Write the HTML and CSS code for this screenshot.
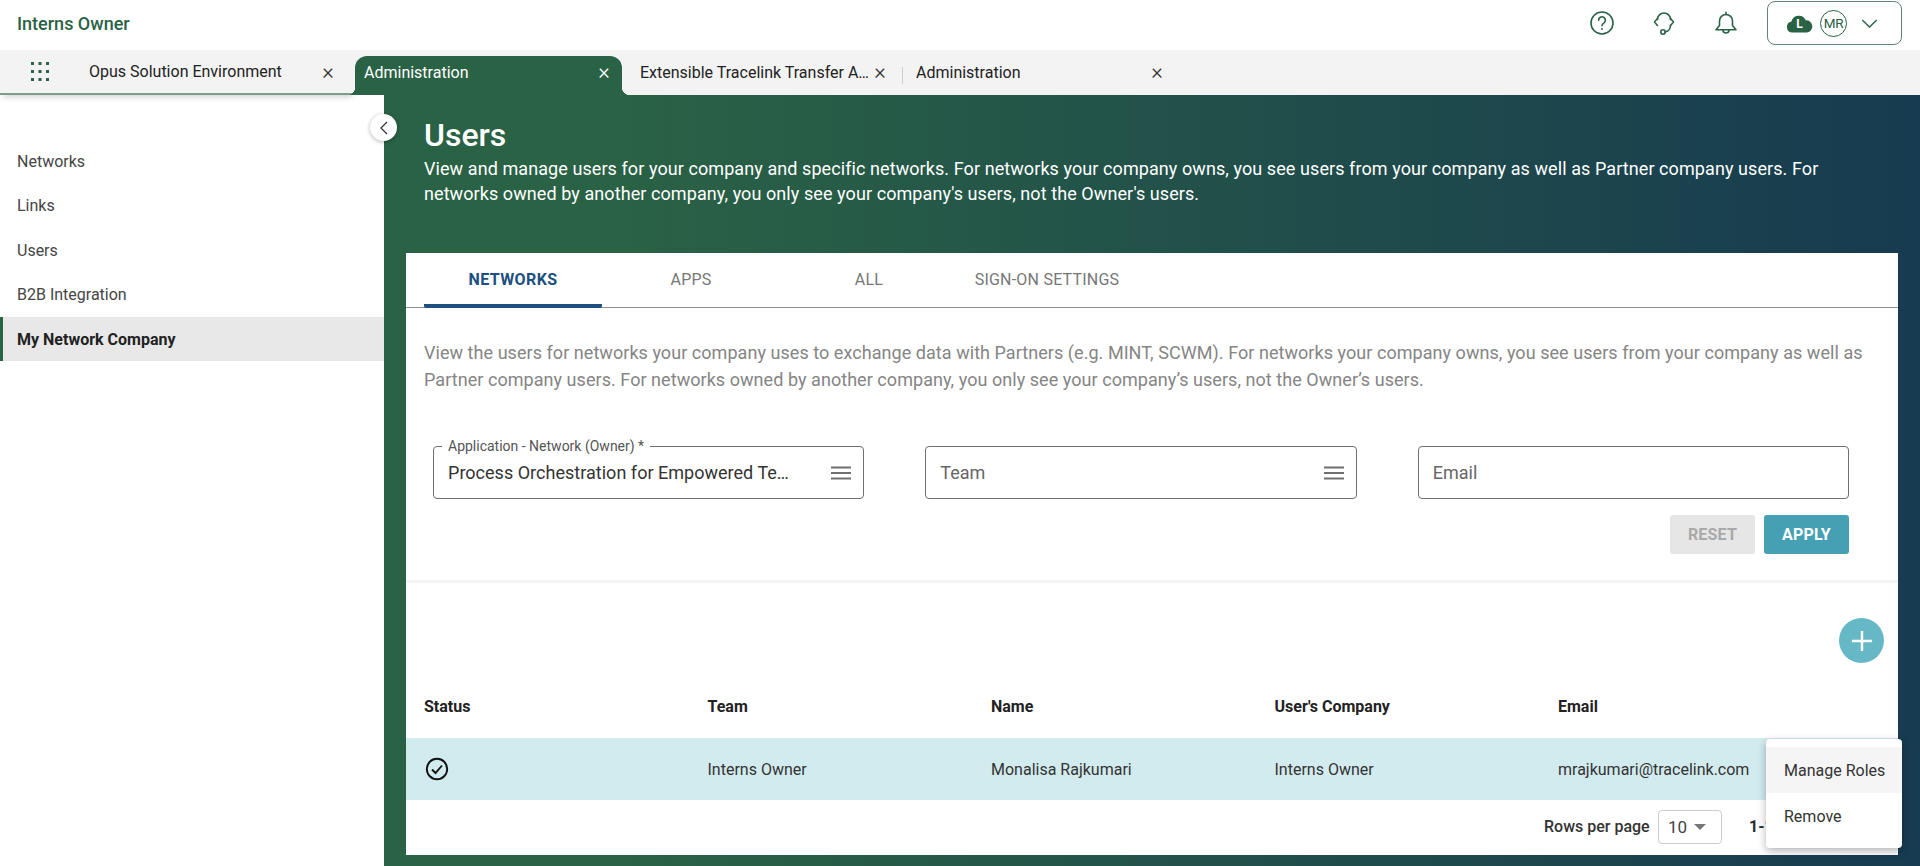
FILE: index.html
```html
<!DOCTYPE html>
<html lang="en">
<head>
<meta charset="utf-8">
<title>Users</title>
<link rel="stylesheet" href="styles.css">
</head>
<body>
<header class="topbar">
  <div class="org">Interns Owner</div>
  <div class="top-actions">
    <svg class="ico" viewBox="0 0 24 24"><circle cx="12" cy="12" r="11"/><path d="M8.600 9.200a3.400 3.400 0 1 1 5.200 2.900c-1.200.8-1.800 1.400-1.800 2.700"/><circle class="fill" cx="12" cy="18" r=".9"/></svg>
    <svg class="ico" viewBox="0 0 24 24"><path d="M5.500 8.500a6.500 6.500 0 0 1 13 0"/><path d="M5.500 7.500 2.500 11l3 3.500M18.500 7.500l3 3.500-3 3.500"/><path d="M18.500 14.500c0 3.500-2.500 6-5.500 6.500"/><circle cx="11" cy="21" r="2.200"/></svg>
    <svg class="ico" viewBox="0 0 24 24"><path d="M12 3.500a6.500 6.500 0 0 0-6.500 6.500v4.500L2 18.800h20l-3.500-4.300V10A6.500 6.500 0 0 0 12 3.500z"/><path d="M12 1.200v2.300M9 19a3 3 0 0 0 6 0"/></svg>
    <div class="account">
      <span class="cloud">
        <svg viewBox="0 0 28 20"><path class="fill" d="M6.500 19.500a5.800 5.800 0 0 1-1-11.500A8 8 0 0 1 20.500 6.500a6.500 6.500 0 0 1 1 13z"/></svg>
        <b>L</b>
      </span>
      <span class="avatar">MR</span>
      <svg class="chev" viewBox="0 0 18 10"><path d="M1 1l8 8 8-8"/></svg>
    </div>
  </div>
</header>

<nav class="tabbar">
  <div class="tabbar-left">
    <svg class="apps" viewBox="0 0 18 20"><g><rect x="0" y="0" width="3" height="3"/><rect x="7.500" y="0" width="3" height="3"/><rect x="15" y="0" width="3" height="3"/><rect x="0" y="8" width="3" height="3"/><rect x="7.500" y="8" width="3" height="3"/><rect x="15" y="8" width="3" height="3"/><rect x="0" y="16" width="3" height="3"/><rect x="7.500" y="16" width="3" height="3"/><rect x="15" y="16" width="3" height="3"/></g></svg>
    <div class="tab tab-first"><span class="tab-label">Opus Solution Environment</span><span class="x">×</span></div>
  </div>
  <div class="tab tab-active"><span class="tab-label">Administration</span><span class="x">×</span></div>
  <div class="tab tab-third"><span class="tab-label">Extensible Tracelink Transfer A…</span><span class="x">×</span></div>
  <div class="tab tab-fourth"><span class="tab-label">Administration</span><span class="x">×</span></div>
</nav>

<div class="shell">
  <aside class="sidebar">
    <a class="nav-item">Networks</a>
    <a class="nav-item">Links</a>
    <a class="nav-item">Users</a>
    <a class="nav-item">B2B Integration</a>
    <a class="nav-item nav-active">My Network Company</a>
  </aside>
  <button class="collapse"><svg viewBox="0 0 8 14"><path d="M7 1L1 7l6 6"/></svg></button>
  <main class="main">
    <h1>Users</h1>
    <p class="lede">View and manage users for your company and specific networks. For networks your company owns, you see users from your company as well as Partner company users. For networks owned by another company, you only see your company's users, not the Owner's users.</p>
    <section class="card">
      <div class="card-tabs">
        <div class="ctab ctab-active">NETWORKS</div>
        <div class="ctab">APPS</div>
        <div class="ctab">ALL</div>
        <div class="ctab">SIGN-ON SETTINGS</div>
      </div>
      <p class="intro">View the users for networks your company uses to exchange data with Partners (e.g. MINT, SCWM). For networks your company owns, you see users from your company as well as Partner company users. For networks owned by another company, you only see your company’s users, not the Owner’s users.</p>
      <div class="filters">
        <div class="field">
          <span class="field-label">Application - Network (Owner) *</span>
          <span class="field-value">Process Orchestration for Empowered Te…</span>
          <svg class="menu-ico" viewBox="0 0 20 14"><path d="M0 1.500h20M0 7h20M0 12.500h20"/></svg>
        </div>
        <div class="field">
          <span class="field-value muted">Team</span>
          <svg class="menu-ico" viewBox="0 0 20 14"><path d="M0 1.500h20M0 7h20M0 12.500h20"/></svg>
        </div>
        <div class="field">
          <span class="field-value muted">Email</span>
        </div>
      </div>
      <div class="actions">
        <button class="btn btn-reset">RESET</button>
        <button class="btn btn-apply">APPLY</button>
      </div>
      <div class="table-area">
        <div class="add-row"><button class="add"><svg viewBox="0 0 24 24"><path d="M12 1v22M1 12h22"/></svg></button></div>
        <div class="trow thead">
          <div>Status</div><div>Team</div><div>Name</div><div>User's Company</div><div>Email</div>
        </div>
        <div class="trow tselected">
          <div><svg class="status" viewBox="0 0 24 24"><circle cx="12" cy="12" r="10.200"/><path d="M7 12.500l3.500 3.500L17 8.500"/></svg></div>
          <div>Interns Owner</div><div>Monalisa Rajkumari</div><div>Interns Owner</div><div>mrajkumari@tracelink.com</div>
        </div>
        <div class="pager">
          <span class="rows-label">Rows per page</span>
          <span class="rows-select">10<i class="caret"></i></span>
          <span class="range">1-1 of 1</span>
        </div>
      </div>
      <div class="popmenu">
        <div class="pop-item pop-hover">Manage Roles</div>
        <div class="pop-item">Remove</div>
      </div>
    </section>
  </main>
</div>
</body>
</html>
```
FILE: styles.css
```css
* { box-sizing: border-box; }
html, body { margin: 0; height: 100%; }
body {
  font-family: Roboto, "Liberation Sans", sans-serif;
  color: #2b2b2b;
  background: #fff;
  height: 866px;
  overflow: hidden;
  display: flex;
  flex-direction: column;
}

/* top bar */
.topbar {
  height: 50px;
  flex: none;
  display: flex;
  align-items: center;
  justify-content: space-between;
  padding: 0 18px 4px 17px;
}
.org { font-size: 18px; font-weight: 500; color: #2a6245; }
.top-actions { display: flex; align-items: center; }
.ico {
  width: 24px; height: 24px;
  margin-right: 38px;
  fill: none;
  stroke: #2a6245;
  stroke-width: 1.600;
  stroke-linecap: round;
  stroke-linejoin: round;
}
.ico .fill { fill: #2a6245; stroke: none; }
.account {
  width: 135px; height: 44px;
  margin-left: -9px;
  border: 1.500px solid #5d8773;
  border-radius: 8px;
  display: flex;
  align-items: center;
  padding-left: 18px;
}
.cloud { position: relative; width: 27px; height: 19px; display: block; }
.cloud svg { width: 27px; height: 19px; display: block; }
.cloud .fill { fill: #2a6245; }
.cloud b {
  position: absolute; left: 0; right: 0; top: 3px;
  text-align: center;
  font-size: 12px; font-weight: 700; line-height: 15px; color: #fff;
}
.avatar {
  width: 27px; height: 27px;
  margin-left: 7px;
  border: 1.500px solid #2a6245;
  border-radius: 50%;
  font-size: 13.500px; line-height: 24px; text-align: center;
  color: #2a5f47;
  white-space: nowrap;
  letter-spacing: -.3px;
}
.chev {
  width: 17px; height: 9px; margin-left: 14px;
  fill: none; stroke: #2a6245; stroke-width: 1.500;
}

/* app tabs */
.tabbar {
  height: 45px;
  flex: none;
  background: #f3f3f3;
  display: flex;
  align-items: flex-end;
  position: relative;
  z-index: 2;
}
.tabbar-left {
  width: 355px;
  height: 45px;
  display: flex;
  align-items: center;
  padding-left: 31px;
  border-bottom: 2px solid #7b9f8c;
  box-shadow: 0 5px 6px -3px rgba(0,0,0,.18);
  background: #f3f3f3;
}
.apps { width: 18px; height: 20px; fill: #2a6245; flex: none; }
.tab {
  display: flex;
  align-items: center;
  font-size: 16px;
  color: #222;
  white-space: nowrap;
}
.tab-label { flex: 1; overflow: hidden; }
.x { font-size: 22px; font-weight: 300; line-height: 20px; width: 16px; text-align: center; color: #333; flex: none; }
.tab-first { margin-left: 40px; height: 43px; flex: none; }
.tab-first .tab-label { flex: none; width: 231px; }
.tab-active {
  width: 267px; flex: none;
  height: 39px;
  position: relative;
  background: #2a6245; color: #fff;
  border-radius: 12px 12px 0 0;
  padding: 0 10px 7px 9px;
}
.tab-active::before, .tab-active::after {
  content: "";
  position: absolute;
  bottom: 0;
  width: 8px; height: 8px;
}
.tab-active::before { left: -8px; background: radial-gradient(circle at 0 0, transparent 8px, #2a6245 8.500px); }
.tab-active::after { right: -8px; background: radial-gradient(circle at 100% 0, transparent 8px, #2a6245 8.500px); }
.tab-active .x { color: #fff; }
.tab-third { width: 281px; padding: 0 15px 7px 18px; height: 39px; position: relative; }
.tab-third::after { content: ""; position: absolute; right: 0; top: 11px; height: 17px; width: 1px; background: #cfcfcf; }
.tab-fourth { width: 262px; padding: 0 0 7px 13px; height: 39px; }

/* shell */
.shell { flex: 1; display: flex; position: relative; min-height: 0; }
.sidebar {
  width: 384px; flex: none;
  padding-top: 44.400px;
  background: #fff;
}
.nav-item {
  display: flex; align-items: center;
  height: 44.400px;
  padding-left: 17px;
  font-size: 16px;
  color: #454545;
}
.nav-active {
  background: #e8e8e8;
  border-left: 3px solid #2a6245;
  padding-left: 14px;
  font-weight: 700;
  color: #222;
}
.collapse {
  position: absolute; left: 370px; top: 19px;
  width: 27px; height: 27px;
  border: 0; border-radius: 50%; padding: 0;
  background: #fff;
  box-shadow: 0 1px 4px rgba(0,0,0,.3);
  display: flex; align-items: center; justify-content: center;
  z-index: 3;
}
.collapse svg { width: 8px; height: 14px; fill: none; stroke: #333; stroke-width: 1.200; }

.main {
  flex: 1;
  min-width: 0;
  background: linear-gradient(90deg, #2a6245 0%, #2a6245 15%, #173b50 100%);
  padding: 22px 22px 0 22px;
  color: #fff;
}
h1 { margin: 0 0 0 18px; font-size: 32px; font-weight: 500; line-height: 36px; color: #fff; }
.lede { margin: 3px 0 0 18px; font-size: 18px; line-height: 25px; width: 1420px; letter-spacing: .08px; }

/* card */
.card {
  position: relative;
  margin-top: 47px;
  background: #fff;
  height: 602px;
  color: #2b2b2b;
}
.card-tabs {
  height: 55px;
  display: flex;
  padding-left: 18px;
  border-bottom: 1px solid #8e8e8e;
}
.ctab {
  width: 178px;
  font-size: 16px;
  font-weight: 400;
  letter-spacing: .22px;
  color: #777;
  text-align: center;
  padding-top: 17px;
  white-space: nowrap;
}
.ctab-active {
  color: #1d4f80;
  font-weight: 700;
  letter-spacing: .4px;
  border-bottom: 4px solid #1d4f80;
  border-radius: 2px;
  height: 55px;
}
.intro {
  margin: 31px 18px 0;
  font-size: 18px;
  line-height: 27px;
  color: #858585;
  letter-spacing: .05px;
}
.filters {
  display: flex;
  gap: 61px;
  padding: 0 49px 0 27px;
  margin-top: 53px;
}
.field {
  position: relative;
  flex: 1;
  height: 53px;
  border: 1.500px solid #6f6f6f;
  border-radius: 4px;
  display: flex;
  align-items: center;
  justify-content: space-between;
  padding: 0 12px 0 14px;
}
.field-label {
  position: absolute;
  left: 8px; top: -9px;
  padding: 0 6px;
  background: #fff;
  font-size: 14px;
  line-height: 16px;
  color: #555;
}
.field-value { font-size: 18px; color: #333; letter-spacing: .02px; white-space: nowrap; }
.muted { color: #666; }
.menu-ico { width: 20px; height: 14px; fill: none; stroke: #6f6f6f; stroke-width: 2; flex: none; }
.actions {
  display: flex;
  justify-content: flex-end;
  gap: 9px;
  padding-right: 49px;
  margin-top: 16px;
}
.btn {
  width: 85px; height: 39px;
  border: 0; border-radius: 3px;
  font-family: inherit;
  font-size: 16px; font-weight: 700;
  letter-spacing: .2px;
}
.btn-reset { background: #e6e6e6; color: #a9a9a9; }
.btn-apply { background: #46a0b4; color: #fff; }
.table-area {
  margin-top: 26px;
  border-top: 3px solid #f3f3f3;
}
.add-row {
  display: flex;
  justify-content: flex-end;
  padding: 35px 14px 0 0;
  height: 106px;
}
.add {
  width: 45px; height: 45px;
  border: 0; border-radius: 50%; padding: 0;
  background: #66b8c7;
  display: flex; align-items: center; justify-content: center;
}
.add svg { width: 22px; height: 22px; stroke: #fff; stroke-width: 2.600; fill: none; }
.trow {
  display: grid;
  grid-template-columns: repeat(5, 283.500px) 1fr;
  padding-left: 18px;
  align-items: center;
  font-size: 16px;
}
.thead { height: 49px; font-weight: 700; color: #222; padding-bottom: 14px; }
.tselected { height: 62px; background: #d2ebef; color: #333; }
.status { width: 24px; height: 24px; margin-left: 1px; display: block; fill: none; stroke: #111; stroke-width: 1.900; }
.pager {
  display: flex;
  align-items: center;
  height: 53px;
  font-size: 16px;
  padding-left: 1138px;
}
.rows-label { font-weight: 500; color: #333; width: 114px; white-space: nowrap; }
.rows-select {
  width: 64px; height: 34px;
  border: 1.500px solid #ccc;
  border-radius: 4px;
  display: flex; align-items: center;
  padding-left: 9px;
  font-size: 17px;
  color: #444;
  position: relative;
}
.caret {
  position: absolute; right: 15px; top: 13px;
  border: 6px solid transparent; border-top: 6px solid #777; border-bottom: 0;
}
.range { margin-left: 27px; font-weight: 700; white-space: nowrap; }
.popmenu {
  position: absolute;
  right: -4px; top: 486px;
  width: 136px; height: 109px;
  padding-top: 8px;
  background: #fff;
  border-radius: 4px;
  box-shadow: 0 3px 8px rgba(0,0,0,.3);
  font-size: 16px;
  color: #333;
}
.pop-item { height: 46px; display: flex; align-items: center; padding-left: 18px; white-space: nowrap; }
.pop-hover { background: #f5f5f5; }
```
